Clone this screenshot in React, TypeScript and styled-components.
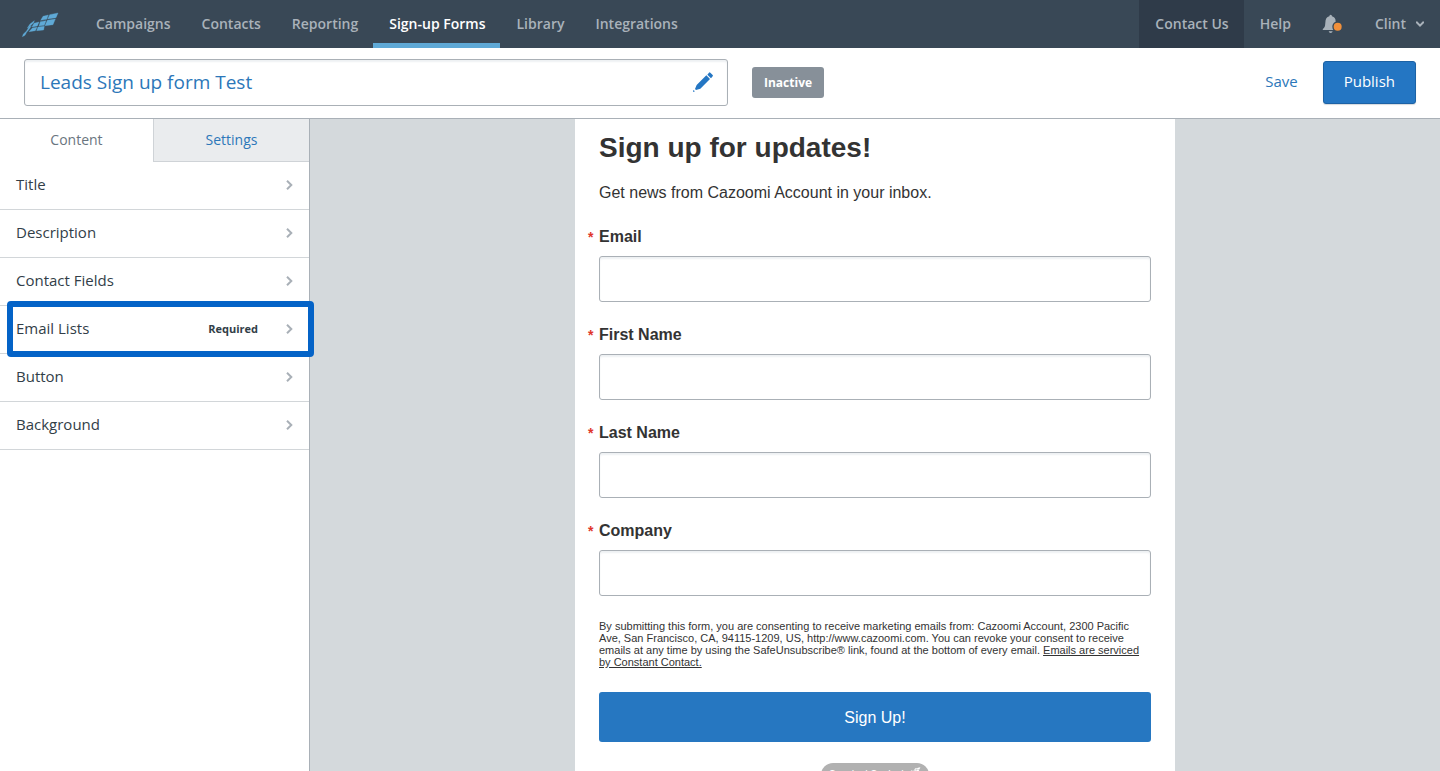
import React from "react";
import styled, { createGlobalStyle, css } from "styled-components";

const uiFont = '"Open Sans", "Noto Sans", sans-serif';
const formFont = '"Liberation Sans", Arial, sans-serif';

const GlobalStyle = createGlobalStyle`
  *, *::before, *::after { box-sizing: border-box; }
  body { margin: 0; font-family: ${uiFont}; color: #323e48; background: #fff; }
  button, input { font: inherit; color: inherit; }
  button { cursor: pointer; }
  h1, p, ul { margin: 0; padding: 0; }
`;

const Page = styled.div`
  display: flex;
  flex-direction: column;
  height: 100vh;
  overflow: hidden;
`;

const TopBar = styled.header`
  display: flex;
  flex: none;
  align-items: stretch;
  height: 48px;
  background: #394856;
`;

const LogoLink = styled.a`
  display: flex;
  align-items: center;
  width: 80px;
  padding: 3px 0 0 20px;
`;

const NavGroup = styled.nav<{ $end?: boolean }>`
  display: flex;
  ${(p) => p.$end && css`margin-left: auto;`}
`;

const navItem = css`
  display: flex;
  align-items: center;
  gap: 10px;
  padding: 0 16px;
  font-size: 14px;
  font-weight: 600;
  line-height: 20px;
  color: #a9b2ba;
  white-space: nowrap;
`;

const NavLink = styled.a<{ $active?: boolean; $shaded?: boolean }>`
  ${navItem}
  padding-right: 15px;
  text-decoration: none;
  ${(p) => p.$active && css`color: #fff; box-shadow: inset 0 -5px #5fa9d6;`}
  ${(p) => p.$shaded && css`background: #2f3b49;`}
`;

const NavButton = styled.button`
  ${navItem}
  border: 0;
  background: none;
`;

const TitleBar = styled.div`
  display: flex;
  flex: none;
  align-items: center;
  gap: 24px;
  height: 71px;
  padding: 0 24px 2px;
  border-bottom: 1px solid #a9b0b7;
`;

const NameField = styled.label`
  display: flex;
  flex: 0 1 704px;
  align-items: center;
  height: 47px;
  padding: 0 13px 0 15px;
  border: 1px solid #aab0b6;
  border-radius: 3px;
  box-shadow: inset 0 2px 2px #eef1f3;
`;

const NameInput = styled.input`
  flex: 1;
  min-width: 0;
  padding: 0;
  border: 0;
  outline: 0;
  background: none;
  font-size: 19px;
  line-height: 28px;
  color: #2c77b9;
`;

const Status = styled.span`
  padding: 6px 12px;
  border-radius: 3px;
  background: #879099;
  color: #fff;
  font-size: 12px;
  font-weight: 700;
  line-height: 19px;
`;

const Actions = styled.div`
  display: flex;
  align-items: center;
  gap: 25px;
  margin-left: auto;
`;

const SaveButton = styled.button`
  padding: 0 0 3px;
  border: 0;
  background: none;
  color: #2c77b9;
  font-size: 15px;
`;

const PublishButton = styled.button`
  height: 43px;
  padding: 0 20px 3px;
  border: 1px solid #1c62a5;
  border-radius: 3px;
  background: #2476c3;
  color: #fff;
  font-size: 15px;
  box-shadow: 0 1px 1px #d5d9dd;
`;

const Workspace = styled.div`
  display: flex;
  flex: 1;
  min-height: 0;
`;

const Sidebar = styled.aside`
  flex: 0 0 310px;
  border-right: 1px solid #a9b0b7;
`;

const Tabs = styled.div`
  display: grid;
  grid-template-columns: 153px 1fr;
  height: 43px;
`;

const Tab = styled.button<{ $selected?: boolean }>`
  padding: 0 0 2px;
  border: 0;
  font-size: 14px;
  ${(p) =>
    p.$selected
      ? css`background: #fff; color: #6a7580;`
      : css`
          border-left: 1px solid #cfd3d7;
          border-bottom: 1px solid #cfd3d7;
          background: #eaecee;
          color: #2c77b9;
        `}
`;

const Sections = styled.ul`
  list-style: none;
`;

const SectionItem = styled.li`
  position: relative;
`;

const SectionButton = styled.button`
  display: flex;
  align-items: center;
  gap: 28px;
  width: 100%;
  height: 48px;
  padding: 0 16px 2px;
  border: 0;
  border-bottom: 1px solid #d2d6d9;
  background: none;
  color: #323e48;
  font-size: 15px;
  text-align: left;
`;

const SectionName = styled.span`
  flex: 1;
  padding-bottom: 2px;
`;

const RequiredTag = styled.span`
  font-size: 11px;
  font-weight: 700;
`;

const Highlight = styled.span`
  position: absolute;
  inset: -5px -5px -3px 7px;
  border: 6px solid #0463c7;
  border-radius: 4px;
  pointer-events: none;
`;

const Preview = styled.main`
  flex: 1;
  min-width: 0;
  overflow: hidden;
  background: #d4d9dc;
`;

const Form = styled.form`
  max-width: 600px;
  min-height: 100%;
  margin: 0 auto;
  padding: 12px 24px 24px;
  background: #fff;
  color: #333;
  font-family: ${formFont};
`;

const FormTitle = styled.h1`
  font-size: 28px;
  line-height: 34px;
`;

const Intro = styled.p`
  margin-top: 17px;
  font-size: 16px;
  line-height: 22px;
`;

const Field = styled.label`
  position: relative;
  display: block;
  margin-top: 21px;
  font-size: 16px;
  font-weight: 700;
  line-height: 24px;
`;

const Star = styled.span`
  position: absolute;
  left: -11px;
  color: #e0352b;
  font-size: 14px;
`;

const FieldInput = styled.input`
  display: block;
  width: 100%;
  height: 46px;
  margin-top: 7px;
  padding: 0 12px;
  border: 1px solid #aab0b6;
  border-radius: 3px;
  background: #fff;
  font-weight: 400;
  box-shadow: inset 0 2px 2px #eef1f3;
`;

const Legal = styled.p`
  margin: 24px 0;
  font-size: 11px;
  line-height: 12px;

  a { color: inherit; }
`;

const SubmitButton = styled.button`
  display: block;
  width: 100%;
  height: 50px;
  padding: 2px 0 0;
  border: 0;
  border-radius: 3px;
  background: #2677c1;
  color: #fff;
  font-size: 16px;
`;

const Brand = styled.div`
  display: flex;
  align-items: flex-start;
  justify-content: center;
  gap: 3px;
  width: 108px;
  height: 24px;
  margin: 21px auto 0;
  padding-top: 4px;
  border-radius: 12px;
  background: #b1b1b1;
  color: #fff;
  font-size: 9px;
  font-weight: 700;
  line-height: 13px;
  white-space: nowrap;
`;

const Mark = ({ width, color }: { width: number; color: string }) => (
  <svg width={width} viewBox="30 24 120 81" fill={color} stroke={color} strokeWidth="1" aria-hidden="true">
    <path d="M119 32l25-5-6 14-25 4zM99 37l16-4-5 13-18 3zM112 49l24-4-7 17-24 3zM91 53l17-3-5 14-16 2zM72 58l15-4-5 12-16 3zM84 69l19-2-2 11-21 2zM67 72l14-2-5 10-19 3zM60 60l13-10-2 6-11 11-8 5zM37 98l3-8 9-8 8-13 7-3-6 9-8 10-5 9z" />
  </svg>
);

const Pencil = () => (
  <svg width="22" height="22" viewBox="36 90 66 66" fill="#2476c3" aria-hidden="true">
    <path d="M87 95q2-2 4 0l7 7q2 2 0 4l-5 6-11-11zM79 103l11 11-29 29-13 4-3-3 5-12zM40 147l5 4-6 2z" />
  </svg>
);

const Bell = () => (
  <svg width="21" height="20" viewBox="610 46 63 60" aria-hidden="true">
    <path
      fill="#a9b2ba"
      d="M636 48q4 0 4 5 11 3 11 16-10 4-10 15 0 5 3 10H612q0-4 4-6 4-4 4-16 0-16 12-19 0-5 4-5zM630 98h12q-1 5-6 5t-6-5z"
    />
    <circle cx="657" cy="84" r="12" fill="#f1903b" />
  </svg>
);

const ChevronDown = () => (
  <svg width="8" height="6" viewBox="0 0 8 6" fill="none" stroke="#a9b2ba" strokeWidth="2" aria-hidden="true">
    <path d="M.2.8 4 4.6 7.8.8" />
  </svg>
);

const ChevronRight = () => (
  <svg width="7" height="10" viewBox="0 0 7 10" fill="none" stroke="#a9b0b7" strokeWidth="2" aria-hidden="true">
    <path d="M1 .8 5.3 5 1 9.2" />
  </svg>
);

const navigation = ["Campaigns", "Contacts", "Reporting", "Sign-up Forms", "Library", "Integrations"];

const sections = [
  { name: "Title" },
  { name: "Description" },
  { name: "Contact Fields" },
  { name: "Email Lists", required: true },
  { name: "Button" },
  { name: "Background" },
];

const fields = ["Email", "First Name", "Last Name", "Company"];

export default function App() {
  return (
    <Page>
      <GlobalStyle />
      <TopBar>
        <LogoLink href="#home" aria-label="Home">
          <Mark width={40} color="#5fa9d6" />
        </LogoLink>
        <NavGroup>
          {navigation.map((name) => (
            <NavLink key={name} href="#" $active={name === "Sign-up Forms"}>
              {name}
            </NavLink>
          ))}
        </NavGroup>
        <NavGroup $end>
          <NavLink href="#contact" $shaded>Contact Us</NavLink>
          <NavLink href="#help">Help</NavLink>
          <NavButton type="button" aria-label="Notifications">
            <Bell />
          </NavButton>
          <NavButton type="button">
            Clint
            <ChevronDown />
          </NavButton>
        </NavGroup>
      </TopBar>

      <TitleBar>
        <NameField>
          <NameInput aria-label="Form name" defaultValue="Leads Sign up form Test" />
          <Pencil />
        </NameField>
        <Status>Inactive</Status>
        <Actions>
          <SaveButton type="button">Save</SaveButton>
          <PublishButton type="button">Publish</PublishButton>
        </Actions>
      </TitleBar>

      <Workspace>
        <Sidebar>
          <Tabs role="tablist">
            <Tab type="button" role="tab" aria-selected="true" $selected>Content</Tab>
            <Tab type="button" role="tab" aria-selected="false">Settings</Tab>
          </Tabs>
          <Sections>
            {sections.map(({ name, required }) => (
              <SectionItem key={name}>
                <SectionButton type="button">
                  <SectionName>{name}</SectionName>
                  {required && <RequiredTag>Required</RequiredTag>}
                  <ChevronRight />
                </SectionButton>
                {required && <Highlight />}
              </SectionItem>
            ))}
          </Sections>
        </Sidebar>

        <Preview>
          <Form onSubmit={(event) => event.preventDefault()}>
            <FormTitle>Sign up for updates!</FormTitle>
            <Intro>Get news from Cazoomi Account in your inbox.</Intro>
            {fields.map((name) => (
              <Field key={name}>
                <Star>*</Star>
                {name}
                <FieldInput type="text" />
              </Field>
            ))}
            <Legal>
              By submitting this form, you are consenting to receive marketing emails from: Cazoomi Account, 2300
              Pacific Ave, San Francisco, CA, 94115-1209, US, http://www.cazoomi.com. You can revoke your consent to
              receive emails at any time by using the SafeUnsubscribe® link, found at the bottom of every email.{" "}
              <a href="#serviced">Emails are serviced by Constant Contact.</a>
            </Legal>
            <SubmitButton type="submit">Sign Up!</SubmitButton>
            <Brand>
              Constant Contact
              <Mark width={14} color="#fff" />
            </Brand>
          </Form>
        </Preview>
      </Workspace>
    </Page>
  );
}
